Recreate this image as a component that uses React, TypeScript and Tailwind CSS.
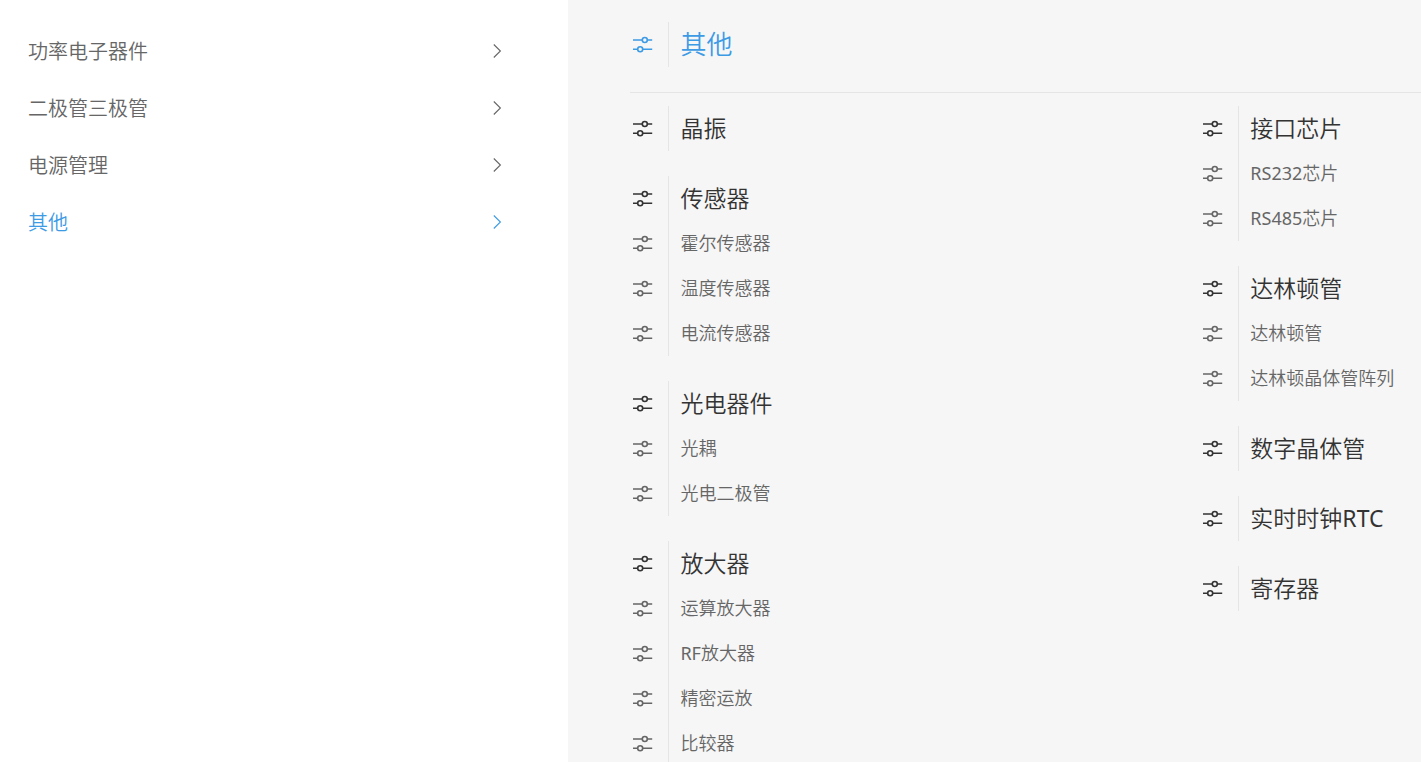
interface Group {
  title: string;
  items: string[];
}

const CATEGORIES = ['功率电子器件', '二极管三极管', '电源管理', '其他'];
const ACTIVE = '其他';

const COLUMNS: Group[][] = [
  [
    { title: '晶振', items: [] },
    { title: '传感器', items: ['霍尔传感器', '温度传感器', '电流传感器'] },
    { title: '光电器件', items: ['光耦', '光电二极管'] },
    { title: '放大器', items: ['运算放大器', 'RF放大器', '精密运放', '比较器'] },
  ],
  [
    { title: '接口芯片', items: ['RS232芯片', 'RS485芯片'] },
    { title: '达林顿管', items: ['达林顿管', '达林顿晶体管阵列'] },
    { title: '数字晶体管', items: [] },
    { title: '实时时钟RTC', items: [] },
    { title: '寄存器', items: [] },
  ],
];

function SlidersIcon() {
  return (
    <svg width="20" height="20" viewBox="0 0 20 20" fill="none" stroke="currentColor" strokeWidth="1.6" aria-hidden="true">
      <path d="M0 5H9.2M14.4 5H19.2M0 14.2H4.6M9.8 14.2H19.2" />
      <circle cx="11.8" cy="5" r="2.5" />
      <circle cx="7.2" cy="14.2" r="2.5" />
    </svg>
  );
}

function ChevronIcon() {
  return (
    <svg width="10" height="16" viewBox="0 0 10 16" fill="none" stroke="currentColor" strokeWidth="1.1" aria-hidden="true">
      <path d="M1.8 0.5L8.4 7L1.8 13.5" />
    </svg>
  );
}

// Latin runs use the regular weight so they sit evenly beside the Chinese text
function Label({ text }: { text: string }) {
  return (
    <span>
      {text.split(/([A-Z0-9]+)/).map((part, i) =>
        i % 2 ? (
          <span key={i} className="font-normal">
            {part}
          </span>
        ) : (
          part
        ),
      )}
    </span>
  );
}

function EntryLink({ label, className }: { label: string; className: string }) {
  return (
    <a href="#" className={`flex h-[45px] items-stretch whitespace-nowrap ${className}`}>
      <span className="flex w-[38px] shrink-0 items-center pl-[3px]">
        <SlidersIcon />
      </span>
      <span className="flex items-center border-l border-[#e5e5e5] pl-[11px]">
        <Label text={label} />
      </span>
    </a>
  );
}

function GroupList({ group }: { group: Group }) {
  return (
    <section>
      <h3>
        <EntryLink label={group.title} className="text-[23px] text-[#333333]" />
      </h3>
      <ul>
        {group.items.map((item) => (
          <li key={item}>
            <EntryLink label={item} className="text-[18px] text-[#666666]" />
          </li>
        ))}
      </ul>
    </section>
  );
}

export default function App() {
  return (
    <div className="flex h-screen overflow-hidden bg-white font-['Noto_Sans','Noto_Sans_CJK_SC',sans-serif] font-[350]">
      {/* Top-level categories */}
      <nav className="w-2/5 shrink-0 pt-[23px] pr-[66px] pl-7">
        <ul>
          {CATEGORIES.map((name) => (
            <li key={name}>
              <a
                href="#"
                className={`flex h-[57px] items-center justify-between text-[20px] ${
                  name === ACTIVE ? 'text-[#3d9be5]' : 'text-[#666666]'
                }`}
              >
                {name}
                <ChevronIcon />
              </a>
            </li>
          ))}
        </ul>
      </nav>

      {/* Sub-categories of the active one */}
      <main className="min-w-0 flex-1 overflow-hidden bg-[#f6f6f6] pt-[22px] pl-[62px]">
        <h2 className="border-b border-[#e5e5e5] pb-[25px]">
          <EntryLink label={ACTIVE} className="text-[26px] text-[#3d9be5]" />
        </h2>
        <div className="grid grid-cols-[31fr_12fr] pt-[13px]">
          {COLUMNS.map((groups) => (
            <div key={groups[0].title} className="flex min-w-0 flex-col gap-[25px]">
              {groups.map((group) => (
                <GroupList key={group.title} group={group} />
              ))}
            </div>
          ))}
        </div>
      </main>
    </div>
  );
}
